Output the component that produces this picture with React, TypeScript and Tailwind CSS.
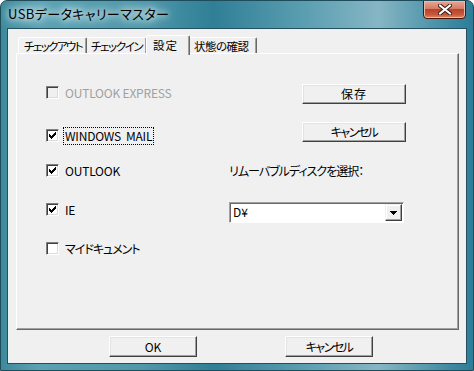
import React from 'react';

function CheckMark() {
  return (
    <svg width="7" height="7" viewBox="0 0 7 7" shapeRendering="crispEdges">
      <path d="M6 0h1v3h-1v1h-1v1h-1v1h-1v1h-1v-1h-1v-1h-1v-3h1v1h1v1h1v-1h1v-1h1z" fill="#000" />
    </svg>
  );
}

function CheckBox({ checked, disabled }: { checked?: boolean; disabled?: boolean }) {
  return (
    <span
      className={`w-[13px] h-[13px] flex items-center justify-center shrink-0 border border-t-[#808080] border-l-[#808080] border-r-white border-b-white shadow-[inset_1px_1px_#404040,inset_-1px_-1px_#dcdcdc] ${
        disabled ? 'bg-[#f0f0f0]' : 'bg-white'
      }`}
    >
      {checked && <CheckMark />}
    </span>
  );
}

function Btn({ label, className }: { label: string; className: string }) {
  return (
    <div
      className={`flex items-center justify-center whitespace-nowrap bg-[#f0f0f0] border border-t-white border-l-white border-r-[#404040] border-b-[#404040] shadow-[inset_-1px_-1px_#a0a0a0,inset_1px_1px_#e3e3e3] text-[12px] ${className}`}
    >
      {label}
    </div>
  );
}

export default function App() {
  const items = [
    { label: 'OUTLOOK EXPRESS', checked: false, disabled: true, mt: 'mt-[32px]' },
    { label: 'WINDOWS  MAIL', checked: true, focus: true, mt: 'mt-[30px]' },
    { label: 'OUTLOOK', checked: true, mt: 'mt-[22px]' },
    { label: 'IE', checked: true, mt: 'mt-[26px]' },
    { label: 'マイドキュメント', checked: false, mt: 'mt-[26px]', kana: true },
  ];

  return (
    <div className="w-[474px] h-[371px] overflow-hidden rounded-t-[7px] border border-[#1e4c5a] bg-[linear-gradient(90deg,#3d8a9c_0%,#5aa2b3_8%,#4f98aa_30%,#2f7f96_45%,#5d9fb2_65%,#86b6c4_80%,#3f8aa3_95%,#2d7c98_100%)] flex flex-col font-['Noto_Sans_CJK_JP',sans-serif] text-black [font-feature-settings:'palt']">
      {/* title bar */}
      <div className="h-[28px] flex items-start shrink-0">
        <span className="ml-[7px] mt-[5px] text-[13px] leading-[16px] tracking-[0.4px] whitespace-nowrap [text-shadow:0_0_6px_#ffffff,0_0_10px_#e8f4f6,0_0_14px_#d8ecf0]">
          USBデータキャリーマスター
        </span>
        <div className="ml-auto mr-[7px] -mt-px w-[43px] h-[19px] rounded-b-[4px] border border-[#4a1408] bg-[linear-gradient(180deg,#e8a896_0%,#d67a64_45%,#b8442a_50%,#c8583c_80%,#e08a60_100%)] shadow-[inset_0_0_0_1px_#f0b8a8] flex items-center justify-center">
          <svg width="14" height="11" viewBox="0 0 14 11">
            <path d="M2 1.5 L12 9.5 M12 1.5 L2 9.5" stroke="#3a1a14" strokeWidth="4" strokeLinecap="square" />
            <path d="M2 1.5 L12 9.5 M12 1.5 L2 9.5" stroke="#ffffff" strokeWidth="2" strokeLinecap="square" />
          </svg>
        </div>
      </div>

      {/* client area */}
      <div className="mx-[7px] h-[334px] bg-[#f0f0f0] border-t border-l border-[#e8f0f2] shadow-[0_0_0_1px_#234f5e] flex flex-col text-[12px] leading-[14px]">
        {/* tabs */}
        <div className="h-[23px] flex items-end pl-[9px] shrink-0 whitespace-nowrap text-[11.5px]">
          <div className="h-[16px] w-[69px] flex items-start pt-px pl-[5px] tracking-[-1.6px] border-t border-l border-white border-r border-r-[#696969] rounded-t-[2px] shadow-[inset_-1px_0_#a0a0a0]">
            チェックアウト
          </div>
          <div className="h-[16px] w-[60px] flex items-start pt-px pl-[4px] tracking-[-1.4px] border-t border-white border-r border-r-[#696969] rounded-t-[2px] shadow-[inset_-1px_0_#a0a0a0]">
            チェックイン
          </div>
          <div className="relative z-10 h-[20px] -mb-[2px] w-[44px] -mx-[1px] flex items-start pt-[2px] pl-[6px] bg-[#f0f0f0] border-t border-l border-white border-r border-r-[#696969] rounded-t-[2px] shadow-[inset_-1px_0_#a0a0a0] tracking-[1px]">
            設定
          </div>
          <div className="h-[16px] w-[68px] flex items-start pt-px pl-[5px] border-t border-white border-r border-r-[#696969] rounded-t-[2px] shadow-[inset_-1px_0_#a0a0a0] tracking-[-0.5px]">
            状態の確認
          </div>
        </div>

        {/* panel */}
        <div className="ml-[7px] w-[443px] h-[277px] shrink-0 flex border-t border-l border-white border-r border-r-[#696969] border-b border-b-[#696969] shadow-[inset_-1px_-1px_#a0a0a0]">
          <div className="w-[212px] pl-[29px] flex flex-col">
            {items.map((it) => (
              <div key={it.label} className={`h-[13px] flex items-center ${it.mt}`}>
                <CheckBox checked={it.checked} disabled={it.disabled} />
                <span
                  className={`ml-[4px] px-px py-[1px] whitespace-pre ${it.kana ? 'tracking-[-1px]' : 'tracking-[-0.2px]'} ${
                    it.focus ? 'border border-dotted border-black' : 'border border-transparent'
                  } ${it.disabled ? 'text-[#a0a0a0]' : ''}`}
                >
                  {it.label}
                </span>
              </div>
            ))}
          </div>
          <div className="w-[190px] flex flex-col">
            <Btn label="保存" className="ml-[73px] mt-[30px] w-[104px] h-[20px] tracking-[1px]" />
            <Btn label="キャンセル" className="ml-[73px] mt-[18px] w-[104px] h-[20px] tracking-[-1.5px]" />
            <div className="mt-[22px] tracking-[-1px] whitespace-nowrap">
              リムーバブルディスクを選択<span className="tracking-normal">：</span>
            </div>
            <div className="mt-[24px] w-[175px] h-[21px] flex bg-white border border-t-[#a0a0a0] border-l-[#a0a0a0] border-r-white border-b-white shadow-[inset_1px_1px_#696969]">
              <span className="pl-[3px] pt-[2px] flex-1">D¥</span>
              <div className="mt-px mr-px w-[17px] h-[17px] flex items-center justify-center bg-[#f0f0f0] border border-t-[#f0f0f0] border-l-[#f0f0f0] border-r-[#404040] border-b-[#404040] shadow-[inset_-1px_-1px_#a0a0a0,inset_1px_1px_#ffffff]">
                <svg width="7" height="4" viewBox="0 0 7 4" shapeRendering="crispEdges">
                  <path d="M0 0h7v1h-1v1h-1v1h-1v1h-1v-1h-1v-1h-1v-1h-1z" fill="#000" />
                </svg>
              </div>
            </div>
          </div>
        </div>

        {/* footer */}
        <div className="flex mt-[6px] pl-[100px]">
          <Btn label="OK" className="w-[88px] h-[21px]" />
          <Btn label="キャンセル" className="ml-[88px] w-[88px] h-[21px] tracking-[-1.5px]" />
        </div>
      </div>
    </div>
  );
}
